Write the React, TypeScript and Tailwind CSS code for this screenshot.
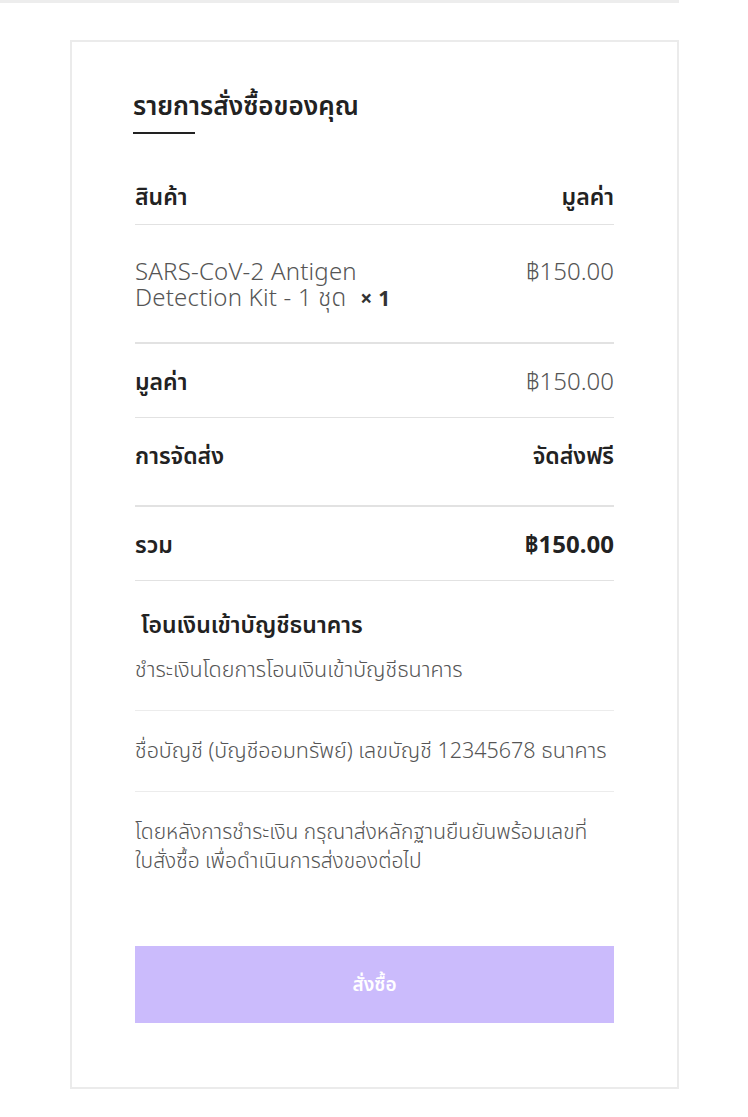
const font = { fontFamily: '"Noto Sans", "Noto Sans Thai", "Open Sans", sans-serif' };

function Row({
  label,
  value,
  className = "",
  valueClass = "",
}: {
  label: string;
  value: string;
  className?: string;
  valueClass?: string;
}) {
  return (
    <div className={`flex justify-between ${className}`}>
      <span className="text-[23px] font-semibold leading-6 text-[#222]">{label}</span>
      <span className={`leading-6 ${valueClass}`}>{value}</span>
    </div>
  );
}

export default function App() {
  return (
    <div className="min-h-[1117px] bg-white" style={font}>
      <div className="h-[3px] w-[679px] bg-[#ededed]" />

      <div className="ml-[70px] mt-[37px] w-[609px] border-2 border-[#ebebeb] px-[63px] pb-[64px] pt-[47px]">
        <h3 className="-ml-[2px] text-[26px] font-semibold leading-8 text-[#222]">รายการสั่งซื้อของคุณ</h3>
        <div className="-ml-[2px] mt-[11px] h-[2px] w-[62px] bg-[#222]" />

        <div className="mt-[33px]">
          <Row
            label="สินค้า"
            value="มูลค่า"
            className="h-[58px] items-center border-b border-[#e2e2e2]"
            valueClass="text-[23px] font-semibold text-[#222]"
          />

          {/* order line */}
          <div className="flex justify-between border-b-2 border-[#e2e2e2] pb-[31px] pt-[33px]">
            <p className="text-[24px] font-light leading-[26px] tracking-[0.2px] text-[#555]">
              SARS-CoV-2 Antigen
              <br />
              Detection Kit - 1 ชุด
              <strong className="ml-[14px] text-[21px] font-bold text-[#333]">× 1</strong>
            </p>
            <span className="text-[24px] font-light leading-[26px] text-[#555]">฿150.00</span>
          </div>

          <Row
            label="มูลค่า"
            value="฿150.00"
            className="h-[74px] items-center border-b border-[#e2e2e2]"
            valueClass="text-[24px] font-light text-[#555]"
          />

          <Row
            label="การจัดส่ง"
            value="จัดส่งฟรี"
            className="h-[89px] items-start border-b-2 border-[#e2e2e2] pt-[25px]"
            valueClass="text-[23px] font-semibold text-[#222]"
          />

          <Row
            label="รวม"
            value="฿150.00"
            className="h-[74px] items-center border-b border-[#e2e2e2]"
            valueClass="text-[24px] font-bold text-[#222]"
          />

          {/* payment method */}
          <div className="pt-[29px]">
            <h4 className="pl-[6px] text-[23px] font-semibold leading-7 text-[#222]">โอนเงินเข้าบัญชีธนาคาร</h4>
            <p className="mt-[17px] text-[21.5px] font-light leading-7 text-[#555]">ชำระเงินโดยการโอนเงินเข้าบัญชีธนาคาร</p>
            <div className="mt-[27px] border-t border-[#ececec]" />
            <p className="mt-[25px] text-[21.5px] font-light leading-7 text-[#555]">
              ชื่อบัญชี (บัญชีออมทรัพย์) เลขบัญชี 12345678 ธนาคาร
            </p>
            <div className="mt-[27px] border-t border-[#ececec]" />
            <p className="mt-[25px] text-[21px] font-light leading-[29px] text-[#555]">
              โดยหลังการชำระเงิน กรุณาส่งหลักฐานยืนยันพร้อมเลขที่
              <br />
              ใบสั่งซื้อ เพื่อดำเนินการส่งของต่อไป
            </p>
          </div>

          <button
            type="button"
            className="mt-[71px] flex h-[77px] w-full items-center justify-center bg-[#cbbbfc] text-[19px] font-semibold text-white"
          >
            สั่งซื้อ
          </button>
        </div>
      </div>
    </div>
  );
}
